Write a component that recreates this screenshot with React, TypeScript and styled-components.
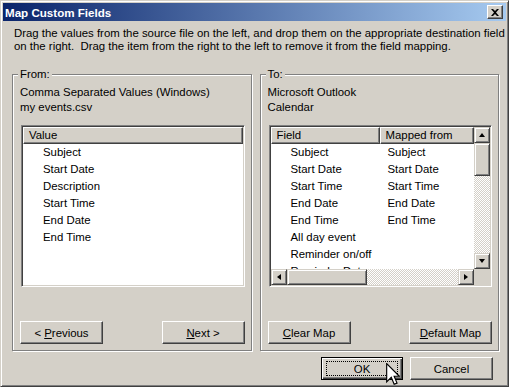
import styled, { createGlobalStyle } from 'styled-components';

const GlobalStyle = createGlobalStyle`
  html, body {
    margin: 0;
    padding: 0;
    background: #d4d0c8;
  }
  body {
    font-family: "Liberation Sans", Arial, sans-serif;
    font-size: 11.4px;
    color: #000;
  }
`;

const Window = styled.div`
  position: relative;
  box-sizing: border-box;
  width: 509px;
  height: 387px;
  padding: 2px;
  background: #d4d0c8;
  border: 1px solid;
  border-color: #d4d0c8 #404040 #404040 #d4d0c8;
  box-shadow: inset 1px 1px #fff, inset -1px -1px #808080;
  display: flex;
  flex-direction: column;
`;

const TitleBar = styled.div`
  height: 18px;
  flex: none;
  display: flex;
  align-items: center;
  justify-content: space-between;
  padding: 0 3px 0 2px;
  background: linear-gradient(to right, #0a246a, #a6caf0);
  color: #fff;
  font-weight: bold;
  font-size: 11.6px;
`;

const CloseButton = styled.div`
  box-sizing: border-box;
  width: 16px;
  height: 14px;
  display: flex;
  align-items: center;
  justify-content: center;
  background: #d4d0c8;
  border: 1px solid;
  border-color: #fff #404040 #404040 #fff;
  box-shadow: inset -1px -1px #808080;
`;

const Body = styled.div`
  flex: 1;
  display: flex;
  flex-direction: column;
  padding: 6px 7px 4px 9px;
`;

const Description = styled.p`
  margin: 0 0 21px 2px;
  height: 26px;
  line-height: 13px;
  white-space: nowrap;
`;

const Groups = styled.div`
  display: flex;
  gap: 8px;
  height: 277px;
`;

const GroupBox = styled.div`
  position: relative;
  box-sizing: border-box;
  width: 240px;
  height: 277px;
  border: 1px solid #808080;
  box-shadow: inset 1px 1px #fff, 1px 1px #fff;
  padding: 10px 6px 6px 7px;
  display: flex;
  flex-direction: column;
`;

const Legend = styled.span`
  position: absolute;
  top: -7px;
  left: 5px;
  padding: 0 2px;
  line-height: 13px;
  background: #d4d0c8;
`;

const InfoLine = styled.div`
  height: 15px;
  line-height: 15px;
  white-space: nowrap;
`;

const ListView = styled.div`
  box-sizing: border-box;
  margin: 10px 0 0 1px;
  height: 162px;
  border: 1px solid;
  border-color: #808080 #fff #fff #808080;
  box-shadow: inset 1px 1px #404040, inset -1px -1px #d4d0c8;
  padding: 1px;
  background: #fff;
  display: grid;
  overflow: hidden;
`;

const ScrollListView = styled(ListView)`
  grid-template-columns: 1fr 16px;
  grid-template-rows: 1fr 16px;
`;

const ListContent = styled.div`
  overflow: hidden;
  min-height: 0;
`;

const HeaderRow = styled.div<{ $cols: string }>`
  display: grid;
  grid-template-columns: ${(p) => p.$cols};
`;

const HeaderCell = styled.div`
  box-sizing: border-box;
  height: 17px;
  line-height: 14px;
  padding-left: 5px;
  background: #d4d0c8;
  border: 1px solid;
  border-color: #fff #404040 #404040 #fff;
  box-shadow: inset -1px -1px #808080;
  white-space: nowrap;
  overflow: hidden;
`;

const Row = styled.div<{ $cols: string }>`
  display: grid;
  grid-template-columns: ${(p) => p.$cols};
  height: 17px;
  line-height: 17px;
  white-space: nowrap;
`;

const Cell = styled.div<{ $indent: number }>`
  padding-left: ${(p) => p.$indent}px;
  overflow: hidden;
`;

const Raised = styled.div`
  box-sizing: border-box;
  background: #d4d0c8;
  border: 1px solid;
  border-color: #d4d0c8 #404040 #404040 #d4d0c8;
  box-shadow: inset 1px 1px #fff, inset -1px -1px #808080;
`;

const ScrollButton = styled(Raised)`
  width: 16px;
  height: 16px;
  flex: none;
  display: flex;
  align-items: center;
  justify-content: center;
`;

const Arrow = styled.span<{ $dir: 'up' | 'down' | 'left' | 'right' }>`
  width: 0;
  height: 0;
  border-style: solid;
  border-color: transparent;
  ${(p) =>
    p.$dir === 'up'
      ? 'border-width: 0 3.5px 4px 3.5px; border-bottom-color: #000;'
      : p.$dir === 'down'
      ? 'border-width: 4px 3.5px 0 3.5px; border-top-color: #000;'
      : p.$dir === 'left'
      ? 'border-width: 3.5px 4px 3.5px 0; border-right-color: #000;'
      : 'border-width: 3.5px 0 3.5px 4px; border-left-color: #000;'}
`;

const ScrollBar = styled.div<{ $vertical?: boolean }>`
  display: flex;
  flex-direction: ${(p) => (p.$vertical ? 'column' : 'row')};
  min-height: 0;
`;

const Track = styled.div`
  flex: 1;
  background-color: #fff;
  background-image: repeating-conic-gradient(#d4d0c8 0 25%, #fff 0 50%);
  background-size: 2px 2px;
`;

const Thumb = styled(Raised)<{ $size: number; $vertical?: boolean }>`
  flex: none;
  ${(p) => (p.$vertical ? `height: ${p.$size}px;` : `width: ${p.$size}px;`)}
`;

const Corner = styled.div`
  background: #d4d0c8;
`;

const Spacer = styled.div`
  flex: 1;
`;

const ButtonRow = styled.div`
  display: flex;
  justify-content: space-between;
`;

const PushButton = styled.button<{ $default?: boolean }>`
  position: relative;
  box-sizing: border-box;
  width: ${(p) => (p.$default ? '82px' : '83px')};
  height: 23px;
  padding: 0;
  font: inherit;
  color: #000;
  background: #d4d0c8;
  border: 1px solid;
  border-color: ${(p) => (p.$default ? '#000' : '#fff #404040 #404040 #fff')};
  box-shadow: ${(p) =>
    p.$default
      ? 'inset 1px 1px #fff, inset -1px -1px #404040, inset -2px -2px #808080'
      : 'inset -1px -1px #808080'};
  u {
    text-decoration: underline;
    text-underline-offset: 1px;
  }
`;

const FocusRect = styled.span`
  position: absolute;
  inset: 3px 4px;
  border: 1px dotted #000;
`;

const Footer = styled.div`
  display: flex;
  justify-content: flex-end;
  gap: 7px;
  margin-top: 6px;
  padding-right: 6px;
`;

const Cursor = styled.svg`
  position: absolute;
  left: 385px;
  top: 362px;
`;

const sourceFields = ['Subject', 'Start Date', 'Description', 'Start Time', 'End Date', 'End Time'];

const mapping: [string, string][] = [
  ['Subject', 'Subject'],
  ['Start Date', 'Start Date'],
  ['Start Time', 'Start Time'],
  ['End Date', 'End Date'],
  ['End Time', 'End Time'],
  ['All day event', ''],
  ['Reminder on/off', ''],
  ['Reminder Date', ''],
];

function App() {
  return (
    <>
      <GlobalStyle />
      <Window>
        <TitleBar>
          <span>Map Custom Fields</span>
          <CloseButton>
            <svg width="8" height="7" viewBox="0 0 8 7">
              <path d="M0 0h2l2 2 2-2h2L5 3.5 8 7H6L4 5 2 7H0l3-3.5z" fill="#000" />
            </svg>
          </CloseButton>
        </TitleBar>
        <Body>
          <Description>
            Drag the values from the source file on the left, and drop them on the appropriate destination field
            <br />
            on the right.&nbsp; Drag the item from the right to the left to remove it from the field mapping.
          </Description>
          <Groups>
            <GroupBox>
              <Legend>From:</Legend>
              <InfoLine>Comma Separated Values (Windows)</InfoLine>
              <InfoLine>my events.csv</InfoLine>
              <ListView>
                <ListContent>
                  <HeaderRow $cols="1fr">
                    <HeaderCell>Value</HeaderCell>
                  </HeaderRow>
                  {sourceFields.map((f) => (
                    <Row key={f} $cols="1fr">
                      <Cell $indent={20}>{f}</Cell>
                    </Row>
                  ))}
                </ListContent>
              </ListView>
              <Spacer />
              <ButtonRow>
                <PushButton>
                  &lt; <u>P</u>revious
                </PushButton>
                <PushButton>
                  <u>N</u>ext &gt;
                </PushButton>
              </ButtonRow>
            </GroupBox>
            <GroupBox>
              <Legend>To:</Legend>
              <InfoLine>Microsoft Outlook</InfoLine>
              <InfoLine>Calendar</InfoLine>
              <ScrollListView>
                <ListContent>
                  <HeaderRow $cols="109px 1fr">
                    <HeaderCell>Field</HeaderCell>
                    <HeaderCell>Mapped from</HeaderCell>
                  </HeaderRow>
                  {mapping.map(([field, from]) => (
                    <Row key={field} $cols="109px 1fr">
                      <Cell $indent={20}>{field}</Cell>
                      <Cell $indent={8}>{from}</Cell>
                    </Row>
                  ))}
                </ListContent>
                <ScrollBar $vertical>
                  <ScrollButton>
                    <Arrow $dir="up" />
                  </ScrollButton>
                  <Thumb $vertical $size={33} />
                  <Track />
                  <ScrollButton>
                    <Arrow $dir="down" />
                  </ScrollButton>
                </ScrollBar>
                <ScrollBar>
                  <ScrollButton>
                    <Arrow $dir="left" />
                  </ScrollButton>
                  <Thumb $size={80} />
                  <Track />
                  <ScrollButton>
                    <Arrow $dir="right" />
                  </ScrollButton>
                </ScrollBar>
                <Corner />
              </ScrollListView>
              <Spacer />
              <ButtonRow>
                <PushButton>
                  <u>C</u>lear Map
                </PushButton>
                <PushButton>
                  <u>D</u>efault Map
                </PushButton>
              </ButtonRow>
            </GroupBox>
          </Groups>
          <Footer>
            <PushButton $default>
              <FocusRect />
              OK
            </PushButton>
            <PushButton>Cancel</PushButton>
          </Footer>
        </Body>
        <Cursor width="14" height="23" viewBox="0 0 12 20">
          <path
            d="M0.5 0.5 L0.5 16.5 L4.5 12.5 L7 18.5 L9.5 17.5 L7 11.5 L11.5 11.5 Z"
            fill="#fff"
            stroke="#000"
            strokeWidth="1"
            strokeLinejoin="miter"
          />
        </Cursor>
      </Window>
    </>
  );
}

export default App;
